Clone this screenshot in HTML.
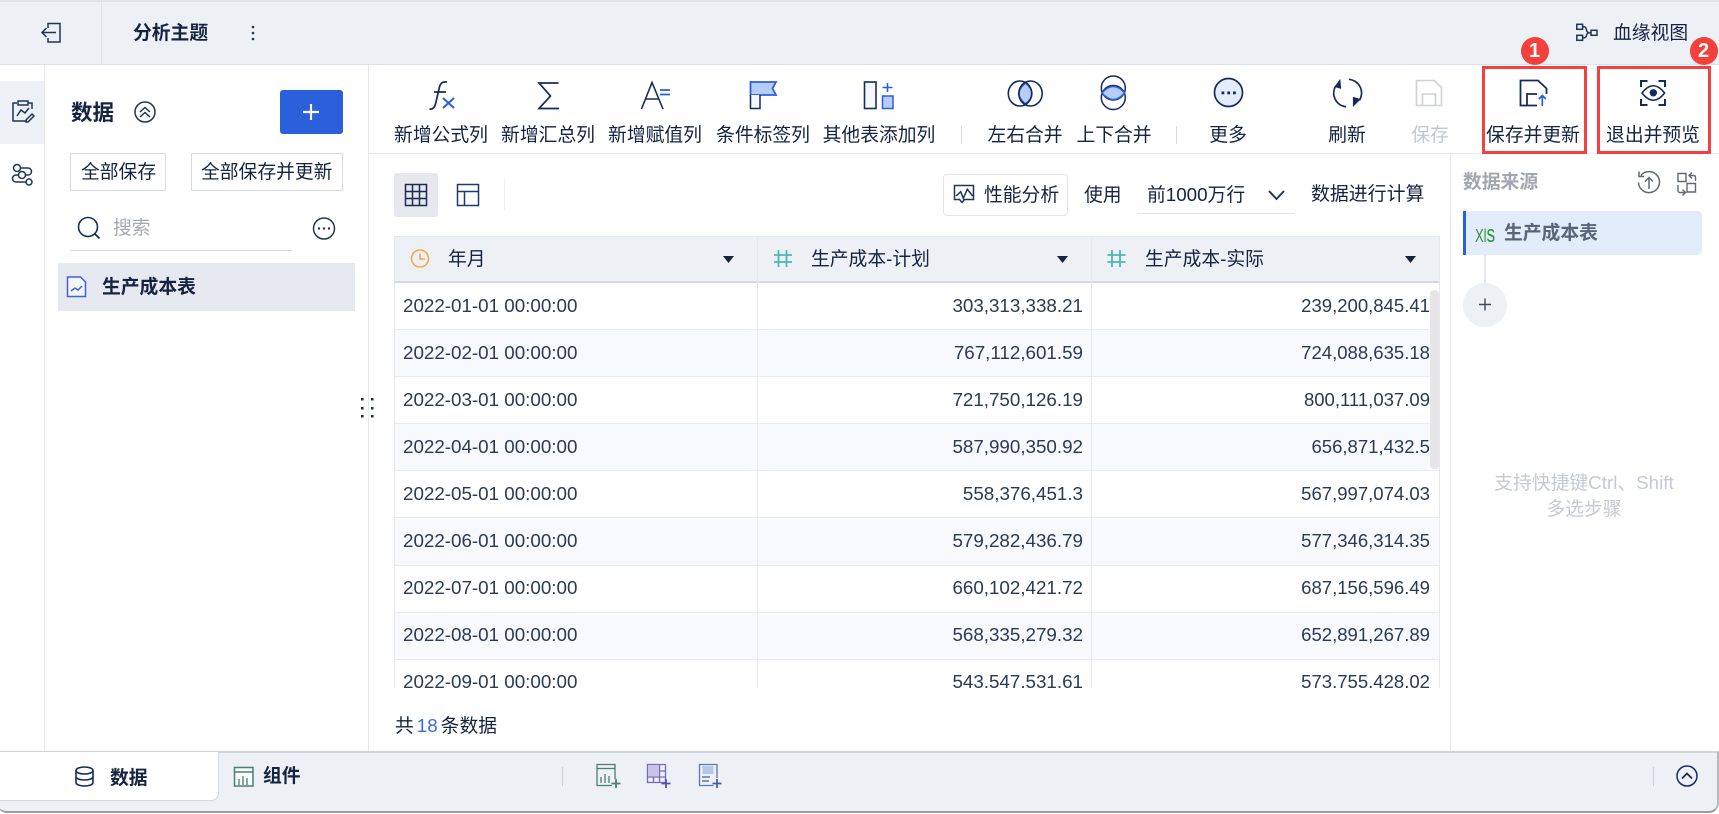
<!DOCTYPE html>
<html lang="zh"><head><meta charset="utf-8"><title>分析主题</title>
<style>
html,body{margin:0;padding:0;background:#fff;}
body{width:1719px;height:814px;position:relative;overflow:hidden;font-family:"Liberation Sans","Noto Sans CJK SC",sans-serif;color:#142340;font-size:18.8px;}
.a{position:absolute;box-sizing:border-box;}
.t{position:absolute;white-space:nowrap;line-height:1;font-size:18.8px;}
.b{font-weight:700;}
.c{transform:translateX(-50%);}
.row{position:absolute;left:0;width:1046px;height:47.1px;box-sizing:border-box;border-bottom:1px solid #e8eaf0;color:#2a3a55;}
.row:nth-child(even){background:#f8f9fc;}
.row span{position:absolute;top:13.6px;line-height:1;white-space:nowrap;font-size:18.55px;}
.row .d{left:8px;font-size:18.8px;}.row .x{right:358px;font-size:18.8px;}.row .y{right:11px;}
svg{position:absolute;left:0;top:0;}
</style></head><body>
<!-- header -->
<div class="a" style="left:0;top:0;width:1719px;height:65px;background:#edf0f5;border-top:2px solid #dfe3e8;border-bottom:1px solid #dce0e8;"></div>
<div class="a" style="left:101px;top:2px;width:1px;height:62px;background:#e0e3ea;"></div>
<div class="t b" style="left:133px;top:24px;">分析主题</div>
<div class="t" style="left:1613px;top:24px;">血缘视图</div>
<!-- left nav -->
<div class="a" style="left:0;top:81px;width:44px;height:63px;background:#edf0f5;"></div>
<div class="a" style="left:44px;top:65px;width:1px;height:686px;background:#e6e8ee;"></div>
<!-- data panel -->
<div class="a" style="left:368px;top:65px;width:1px;height:686px;background:#e6e8ee;"></div>
<div class="t b" style="left:71px;top:103px;font-size:21.5px;">数据</div>
<div class="a" style="left:280px;top:90px;width:63px;height:44px;background:#2b5fdb;border-radius:3px;"></div>
<div class="a" style="left:70px;top:153px;width:96px;height:38px;border:1px solid #d8dbe4;"></div>
<div class="t" style="left:81px;top:163px;">全部保存</div>
<div class="a" style="left:191px;top:153px;width:152px;height:38px;border:1px solid #d8dbe4;"></div>
<div class="t" style="left:201px;top:163px;">全部保存并更新</div>
<div class="t" style="left:113px;top:219px;color:#a4a9b3;">搜索</div>
<div class="a" style="left:70px;top:250px;width:222px;height:1px;background:#d8dbe4;"></div>
<div class="a" style="left:58px;top:263px;width:297px;height:48px;background:#e6e9f0;"></div>
<div class="t b" style="left:102px;top:278px;">生产成本表</div>
<!-- toolbar -->
<div class="a" style="left:369px;top:153px;width:1350px;height:1px;background:#e8eaf0;"></div>
<div class="t c" style="left:441px;top:126px;">新增公式列</div>
<div class="t c" style="left:548px;top:126px;">新增汇总列</div>
<div class="t c" style="left:655px;top:126px;">新增赋值列</div>
<div class="t c" style="left:763px;top:126px;">条件标签列</div>
<div class="t c" style="left:879px;top:126px;">其他表添加列</div>
<div class="a" style="left:961px;top:126px;width:1px;height:18px;background:#d8dbe4;"></div>
<div class="t c" style="left:1025px;top:126px;">左右合并</div>
<div class="t c" style="left:1114px;top:126px;">上下合并</div>
<div class="a" style="left:1176px;top:126px;width:1px;height:18px;background:#d8dbe4;"></div>
<div class="t c" style="left:1228px;top:126px;">更多</div>
<div class="t c" style="left:1347px;top:126px;">刷新</div>
<div class="t c" style="left:1430px;top:126px;color:#c3c7cf;">保存</div>
<div class="t c" style="left:1533px;top:126px;">保存并更新</div>
<div class="t c" style="left:1653px;top:126px;">退出并预览</div>
<!-- table toolbar -->
<div class="a" style="left:394px;top:173px;width:44px;height:44px;background:#e6e8ed;border-radius:3px;"></div>
<div class="a" style="left:504px;top:179px;width:1px;height:32px;background:#edf0f5;"></div>
<div class="a" style="left:943px;top:174px;width:125px;height:42px;border:1px solid #e2e4ea;border-radius:4px;"></div>
<div class="t" style="left:984px;top:186px;">性能分析</div>
<div class="t" style="left:1084px;top:186px;">使用</div>
<div class="t" style="left:1147px;top:186px;">前1000万行</div>
<div class="a" style="left:1137px;top:213px;width:158px;height:1px;background:#dfe1e8;"></div>
<div class="t" style="left:1311px;top:186px;font-size:18.9px;">数据进行计算</div>
<!-- table -->
<div class="a" style="left:394px;top:236px;width:1046px;height:47px;background:#edf0f5;border:1px solid #e6e8ee;border-bottom:2px solid #d5d7e3;"></div>
<div class="a" style="left:757px;top:236px;width:1px;height:452px;background:#e6e8ee;"></div>
<div class="a" style="left:1091px;top:236px;width:1px;height:452px;background:#e6e8ee;"></div>
<div class="t" style="left:448px;top:250px;">年月</div>
<div class="t" style="left:811px;top:250px;">生产成本-计划</div>
<div class="t" style="left:1145px;top:250px;">生产成本-实际</div>
<div class="a" style="left:394px;top:283px;width:1046px;height:405px;overflow:hidden;border-left:1px solid #e6e8ee;border-right:1px solid #e6e8ee;">
<div style="position:relative;width:1046px;height:430px;">
<div class="row" style="top:0"><span class="d">2022-01-01 00:00:00</span><span class="x">303,313,338.21</span><span class="y">239,200,845.41</span></div>
<div class="row" style="top:47.1px"><span class="d">2022-02-01 00:00:00</span><span class="x">767,112,601.59</span><span class="y">724,088,635.18</span></div>
<div class="row" style="top:94.2px"><span class="d">2022-03-01 00:00:00</span><span class="x">721,750,126.19</span><span class="y">800,111,037.09</span></div>
<div class="row" style="top:141.3px"><span class="d">2022-04-01 00:00:00</span><span class="x">587,990,350.92</span><span class="y">656,871,432.5</span></div>
<div class="row" style="top:188.4px"><span class="d">2022-05-01 00:00:00</span><span class="x">558,376,451.3</span><span class="y">567,997,074.03</span></div>
<div class="row" style="top:235.5px"><span class="d">2022-06-01 00:00:00</span><span class="x">579,282,436.79</span><span class="y">577,346,314.35</span></div>
<div class="row" style="top:282.6px"><span class="d">2022-07-01 00:00:00</span><span class="x">660,102,421.72</span><span class="y">687,156,596.49</span></div>
<div class="row" style="top:329.7px"><span class="d">2022-08-01 00:00:00</span><span class="x">568,335,279.32</span><span class="y">652,891,267.89</span></div>
<div class="row" style="top:376.8px"><span class="d">2022-09-01 00:00:00</span><span class="x">543,547,531.61</span><span class="y">573,755,428.02</span></div>
</div></div>
<div class="a" style="left:757px;top:283px;width:1px;height:405px;background:#e6e8ee;"></div>
<div class="a" style="left:1091px;top:283px;width:1px;height:405px;background:#e6e8ee;"></div>
<div class="a" style="left:1430px;top:290px;width:9px;height:179px;background:#e6e6e8;border-radius:4px;"></div>
<div class="t" style="left:395px;top:717px;">共<span style="color:#3e6ae1;margin:0 3px;">18</span>条数据</div>
<!-- right panel -->
<div class="a" style="left:1450px;top:154px;width:1px;height:597px;background:#e2e4ea;"></div>
<div class="t b" style="left:1463px;top:173px;color:#a2a6ae;">数据来源</div>
<div class="a" style="left:1463px;top:211px;width:239px;height:44px;background:#e3ecfb;border-left:3px solid #2b5fdb;border-radius:0 5px 5px 0;"></div>
<div class="t" style="left:1475px;top:223px;color:#2d9431;font-size:18px;transform:scaleX(.72);transform-origin:left;">Xl<span style="font-size:24px;">s</span></div>
<div class="t b" style="left:1504px;top:224px;color:#5a6478;">生产成本表</div>
<div class="a" style="left:1484px;top:255px;width:2px;height:28px;background:#e6e8ed;"></div>
<div class="a" style="left:1463px;top:283px;width:44px;height:44px;border-radius:50%;background:#edf0f5;"></div>
<div class="t c" style="left:1584px;top:474px;color:#c5c9d2;">支持快捷键Ctrl、Shift</div>
<div class="t c" style="left:1584px;top:500px;color:#c5c9d2;">多选步骤</div>
<!-- bottom bar -->
<div class="a" style="left:0;top:751px;width:1719px;height:63px;background:#fff;"></div>
<div class="a" style="left:-3px;top:751px;width:1722px;height:62px;background:#edf0f5;border-top:2px solid #cfd3da;border-bottom:2px solid #9a9da2;border-right:2px solid #b5b8bd;border-radius:0 0 10px 10px;"></div>
<div class="a" style="left:0;top:752px;width:219px;height:49px;background:#fff;border-right:1px solid #d5d8df;border-bottom:1px solid #d5d8df;border-radius:0 0 8px 0;"></div>
<div class="t b" style="left:110px;top:769px;">数据</div>
<div class="t b" style="left:263px;top:767px;">组件</div>
<div class="a" style="left:562px;top:767px;width:1px;height:19px;background:#ccd0d6;"></div>
<div class="a" style="left:1653px;top:767px;width:1px;height:19px;background:#ccd0d6;"></div>
<!-- red boxes -->
<div class="a" style="left:1482px;top:66px;width:105px;height:88px;border:3px solid #f44040;"></div>
<div class="a" style="left:1597px;top:66px;width:114px;height:88px;border:3px solid #f44040;"></div>
<div class="a" style="left:1520.5px;top:36.500px;width:28px;height:28px;border-radius:50%;background:#f4403a;"></div>
<div class="a" style="left:1689.5px;top:36.500px;width:28px;height:28px;border-radius:50%;background:#f4403a;"></div>
<div class="t b c" style="left:1534.5px;top:41px;color:#fff;font-size:20px;">1</div>
<div class="t b c" style="left:1703.5px;top:41px;color:#fff;font-size:20px;">2</div>
<!-- icons -->
<svg width="1719" height="814" viewBox="0 0 1719 814" fill="none" stroke="#142c5c" stroke-width="1.5">
<!-- exit -->
<path d="M48 28v-4.500h12v18.500H48v-4M56 32.500H42M46.500 28l-4.500 4.500 4.500 4.500" stroke="#1f3554"/>
<circle cx="253" cy="27" r="1.300" fill="#1f3554" stroke="none"/><circle cx="253" cy="33" r="1.300" fill="#1f3554" stroke="none"/><circle cx="253" cy="39" r="1.300" fill="#1f3554" stroke="none"/>
<!-- nav icons -->
<path d="M17 103h-4v18h14M18 101h10v4H18zM28 103h4v6M17 116l4-6 4 3 4-5M26 120l6-6 2 2-6 6h-2z" stroke="#1f3554"/>
<circle cx="17" cy="168" r="3.500" stroke="#1f3554"/><circle cx="22" cy="175" r="3.500" stroke="#1f3554"/><circle cx="29" cy="182" r="3" stroke="#1f3554"/>
<path d="M20.500 168H28a3.500 3.500 0 0 1 0 7H25.500M18.500 175H16a3.500 3.500 0 0 0 0 7H26" stroke="#1f3554"/>
<!-- data title icon -->
<circle cx="145" cy="112" r="10" stroke="#1f3554"/><path d="M140 112l5-4.500 5 4.500M140 117l5-4.500 5 4.500" stroke="#1f3554"/>
<path d="M311 104v16M303 112h16" stroke="#fff" stroke-width="2.200"/>
<!-- search -->
<circle cx="88" cy="227" r="9.500" stroke-width="1.600"/><path d="M95 234l4.500 4.500" stroke-width="1.800"/>
<circle cx="324" cy="228.500" r="10.500" stroke="#1f3554"/><circle cx="319" cy="228.500" r="1.200" fill="#1f3554" stroke="none"/><circle cx="324" cy="228.500" r="1.200" fill="#1f3554" stroke="none"/><circle cx="329" cy="228.500" r="1.200" fill="#1f3554" stroke="none"/>
<!-- list file icon -->
<path d="M67.500 277h13l5 5v14.500h-18z" stroke="#3c62d6" fill="#f3f6fd"/><path d="M71 291l4-3 3 2 4-4" stroke="#3c62d6"/>
<!-- drag dots -->
<g fill="#1c2840" stroke="none"><rect x="361" y="398" width="2.500" height="2.500"/><rect x="371" y="398" width="2.500" height="2.500"/><rect x="361" y="407" width="2.500" height="2.500"/><rect x="371" y="407" width="2.500" height="2.500"/><rect x="361" y="415" width="2.500" height="2.500"/><rect x="371" y="415" width="2.500" height="2.500"/></g>
<!-- fx -->
<path d="M429.500 109c3 .5 5-1 6-5l4-17c1-4 3-5.500 7.500-5M434 92h12" stroke-width="1.700"/>
<path d="M443 98l11 10M454 98l-11 10" stroke="#2b5fdb" stroke-width="2"/>
<!-- sigma -->
<path d="M558.500 83H539l11.500 13L539 108.500h20" stroke-width="1.700"/>
<!-- A= -->
<path d="M641.500 109L652 82.500 663 109M645.500 99h13" stroke-width="1.600"/><path d="M660 90h10M660 94.500h10" stroke="#2b5fdb" stroke-width="1.800"/>
<!-- flag -->
<path d="M750.500 82H776l-3.500 6.500 3.500 6.500H750.500z" fill="#b5cdf7" stroke="#2b5fdb" stroke-width="1.800"/>
<path d="M750.500 95v13.500h9.500V95" fill="#f5f8fd" stroke-width="1.500"/>
<!-- other -->
<rect x="864.500" y="82" width="11.500" height="26.500" fill="#f5f8fd" stroke-width="1.600"/><rect x="882.500" y="96" width="10.500" height="12.500" fill="#b5cdf7" stroke="#2b5fdb" stroke-width="1.500"/><path d="M887.500 83v9M882.500 87.500h10" stroke="#2b5fdb" stroke-width="1.600"/>
<!-- venn h -->
<path d="M1025.500 83q13 10.500 0 21-13-10.500 0-21z" fill="#b5cdf7" stroke="#2b5fdb" stroke-width="1.500"/>
<ellipse cx="1020" cy="93.500" rx="11.700" ry="12.500" stroke-width="1.600"/><ellipse cx="1030.500" cy="93.500" rx="11.700" ry="12.500" stroke-width="1.600"/>
<!-- venn v -->
<circle cx="1113.300" cy="88" r="12" stroke-width="1.500"/><circle cx="1113.300" cy="97.500" r="12" stroke-width="1.500"/>
<path d="M1102 93q11.300-13 22.600 0-11.300 13-22.600 0z" fill="#b5cdf7" stroke="#2b5fdb" stroke-width="1.500"/>
<!-- more -->
<circle cx="1228.500" cy="92.500" r="14" fill="#e3ecfb" stroke-width="1.700"/><g fill="#142c5c" stroke="none"><rect x="1221.500" y="91.500" width="2.800" height="2.800"/><rect x="1227.300" y="91.500" width="2.800" height="2.800"/><rect x="1233" y="91.500" width="2.800" height="2.800"/></g>
<!-- refresh -->
<path d="M1349 79.300a13.800 13.800 0 0 1 10.500 21M1346 106.800a13.800 13.800 0 0 1-10.200-21" stroke-width="1.700"/>
<path d="M1340 80l.7 8.300-5.700-1.600zM1353.300 106l0-8.700 6.700 2z" fill="#142c5c" stroke="#142c5c" stroke-width=".8"/>
<!-- save -->
<path d="M1416.500 80.500h18l7 7v18h-25zM1422.500 105.500v-11.500h13v11.500" stroke="#cdd0d6" stroke-width="1.600"/>
<!-- save update -->
<path d="M1546.500 94v-5.500l-8.500-8h-17.500v25h16.500M1527 105.500V94h10" stroke-width="1.800"/>
<path d="M1542.300 106V95.500M1538.800 99l3.500-3.500 3.500 3.500" stroke="#2b5fdb" stroke-width="1.700"/>
<!-- eye -->
<path d="M1641 87v-6h6.500M1658.500 81h6.500v6M1665 99v6h-6.500M1647.500 105h-6.500v-6" stroke-width="2"/>
<path d="M1642 93q11.300-14.500 22.600 0-11.300 14.500-22.600 0z" stroke-width="1.600"/><circle cx="1653.300" cy="92.800" r="3.700" fill="#142c5c" stroke="none"/>
<!-- lineage -->
<rect x="1576.800" y="24.300" width="5.800" height="5" stroke="#1f3554"/><rect x="1576.800" y="35.300" width="5.800" height="5" stroke="#1f3554"/><rect x="1591" y="30.300" width="6" height="5" stroke="#1f3554"/>
<path d="M1582.600 26.800h1.400q2 0 2.500 3.200t4.500 3M1582.600 37.800h1.400q2 0 2.500-2.300t2-2.500" stroke="#1f3554"/>
<!-- table toolbar icons -->
<path d="M405.500 184.500h21v21h-21zM405.500 191.500h21M405.500 198.500h21M412.500 184.500v21M419.500 184.500v21" stroke="#1a2c55"/>
<path d="M457.500 184.500h21v21h-21zM457.500 191.500h21M464.500 191.500v14" stroke="#1a3a75"/>
<!-- perf -->
<path d="M954.500 185.500h19v14h-9l-2.500 3-2.500-3h-5zM956 196l4.700-4.300 2.600 6.600 4-9 5.400 6.700" stroke="#1f3554" stroke-width="1.500"/>
<path d="M1269 191l7.500 8 7.500-8" stroke="#1f3554" stroke-width="1.900"/>
<!-- header icons -->
<circle cx="420" cy="258.500" r="8.500" stroke="#f5a94b" stroke-width="1.600"/><path d="M420 253.500v5.500h5" stroke="#f5a94b" stroke-width="1.600"/>
<path d="M723 256h11l-5.500 7z" fill="#142340" stroke="none"/><path d="M1057 256h11l-5.500 7z" fill="#142340" stroke="none"/><path d="M1405 256h11l-5.500 7z" fill="#142340" stroke="none"/>
<path d="M778.500 250v17M786.500 250v17M774 255h18M774 262h18" stroke="#4fb7ad" stroke-width="1.800"/>
<path d="M1112 250v17M1120 250v17M1107.500 255h18M1107.500 262h18" stroke="#4fb7ad" stroke-width="1.800"/>
<!-- right panel -->
<path d="M1640.800 175.500a10.500 10.500 0 1 1-2.300 7M1639 171.500v5h5" stroke="#5e6878" stroke-width="1.500"/><path d="M1649 189v-11M1645 181.500l4-4 4 4" stroke="#5e6878" stroke-width="1.500"/>
<path d="M1678 173.500h8v8h-8zM1687 183.500h8.500v8.500H1687zM1689 175.500h4.500q2 0 2 2v3.500M1692 172.500l-3 3 3 3M1685.500 192.500H1680q-2 0-2-2V185M1682.500 189.500l3 3-3 3" stroke="#5e6878" stroke-width="1.400"/>
<path d="M1485 298.500v12M1479 304.500h12" stroke="#3f4a5e" stroke-width="1.400"/>
<!-- bottom icons -->
<ellipse cx="84.500" cy="770.500" rx="8.500" ry="3.500" stroke-width="1.600"/><path d="M76 770.500v12c0 2 3.500 3.500 8.500 3.500s8.500-1.500 8.500-3.500v-12M76 776.500c0 2 3.500 3.500 8.500 3.500s8.500-1.500 8.500-3.500" stroke-width="1.600"/>
<rect x="234.500" y="767.500" width="18.500" height="18.500" stroke="#4a7f75" fill="#f8fafa"/><path d="M234.500 772h18.500" stroke="#4a7f75"/><path d="M239 785v-6M243 785v-9M247 785v-7" stroke="#4a7f75" stroke-width="1.300"/>
<path d="M615 779v-14.500h-18v21h15M597 768.500h18M601 783v-6M605 783v-9M609 783v-7" stroke="#4a7f75" stroke-width="1.300"/><path d="M616 779v9M611.500 783.500h9" stroke="#4a7f75" stroke-width="1.800"/>
<path d="M647.500 764.500h18v18h-18zM647.500 777h18M653.500 777v6M659.500 764.500v18M659.500 771h6" stroke="#7a67bd" stroke-width="1.300"/><rect x="648" y="765" width="11" height="11.500" fill="#c9c3e8" stroke="none"/><path d="M666 779v9M661.500 783.500h9" stroke="#5d4fb0" stroke-width="1.800"/>
<path d="M717 778v-13.500h-17.500v21h14" stroke="#5a77ae" stroke-width="1.300"/><rect x="702.500" y="766" width="11" height="8" fill="#b5c7e6" stroke="none"/><path d="M702 777h8M702 781h7" stroke="#5a77ae" stroke-width="1.500"/><path d="M717 779v9M712.500 783.500h9" stroke="#3f5fa5" stroke-width="1.800"/>
<circle cx="1687" cy="776" r="10" stroke-width="1.500"/><path d="M1682 778.500l5-5 5 5" stroke-width="1.800"/>
</svg>
</body></html>
